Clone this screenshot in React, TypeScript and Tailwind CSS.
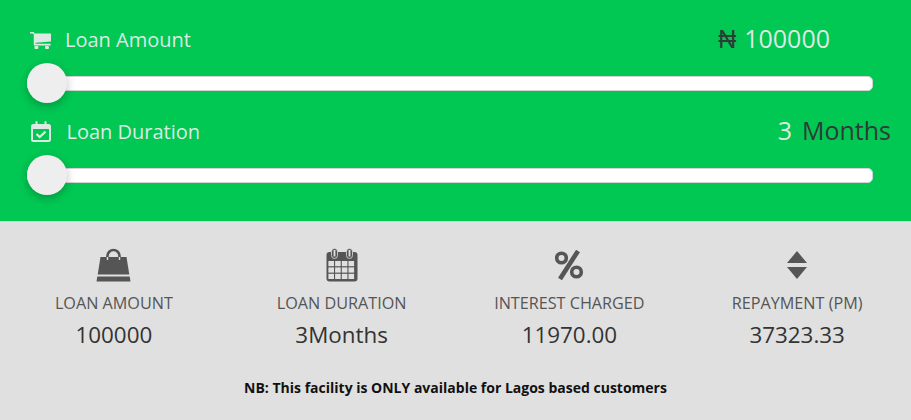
function CartIcon() {
  return (
    <svg width="21" height="17" viewBox="0 0 21 17" fill="#dfe9e3">
      <path d="M0 0h3.6l.9 1.6H21v8l-15.4 1.2v1h15v1.6H3.8V2.4L2.8 1.4H0z" />
      <rect x="4.4" y="14" width="4" height="3" rx="1" />
      <rect x="15" y="14" width="4" height="3" rx="1" />
    </svg>
  );
}

function CalendarCheckIcon() {
  return (
    <svg width="20" height="21" viewBox="0 0 20 21" fill="none" stroke="#dfe9e3" strokeWidth="2">
      <rect x="1" y="4" width="18" height="16" rx="1.5" />
      <path d="M5.5 1v4.5M14.5 1v4.5" strokeLinecap="round" />
      <path d="M1 6.5h18" strokeWidth="3" />
      <path d="M5.5 13l3.2 3 5.8-5.4" strokeWidth="2.2" />
    </svg>
  );
}

function BagIcon() {
  return (
    <svg width="35" height="34" viewBox="0 0 35 34">
      <path d="M11.5 15V8a6 6 0 0 1 12 0V15" fill="none" stroke="#555" strokeWidth="2.6" />
      <path d="M4.5 9h26l2.8 17.5H1.7z" fill="#555" />
      <path d="M11.5 9v3M23.5 9v3" stroke="#e0e0e0" strokeWidth="1.4" />
      <path d="M1.3 28.5h32.4l.8 5H.5z" fill="#555" />
    </svg>
  );
}

function CalendarIcon() {
  const cells = [];
  for (let r = 0; r < 3; r++) {
    for (let c = 0; c < 4; c++) {
      cells.push(<rect key={`${r}-${c}`} x={2.4 + c * 6.7} y={13 + r * 6.4} width="5.6" height="5.2" fill="#e0e0e0" />);
    }
  }
  return (
    <svg width="32" height="34" viewBox="0 0 32 34">
      <rect x="0.5" y="4" width="31" height="29.5" rx="3" fill="#555" />
      <rect x="5.5" y="0.5" width="6" height="10" rx="3" fill="#555" stroke="#e0e0e0" strokeWidth="0.8" />
      <rect x="20.5" y="0.5" width="6" height="10" rx="3" fill="#555" stroke="#e0e0e0" strokeWidth="0.8" />
      <rect x="7.6" y="2" width="1.8" height="6.5" fill="#e0e0e0" />
      <rect x="22.6" y="2" width="1.8" height="6.5" fill="#e0e0e0" />
      {cells}
    </svg>
  );
}

function PercentIcon() {
  return (
    <svg width="30" height="30" viewBox="0 0 30 30" fill="none" stroke="#555">
      <circle cx="7.5" cy="8" r="4.8" strokeWidth="3.6" />
      <circle cx="22.5" cy="22" r="4.8" strokeWidth="3.6" />
      <path d="M24 1L6 29" strokeWidth="4.6" />
    </svg>
  );
}

function SortIcon() {
  return (
    <svg width="20" height="28" viewBox="0 0 20 28" fill="#555">
      <path d="M10 0l10 12H0z" />
      <path d="M0 16h20L10 28z" />
    </svg>
  );
}

function Slider() {
  return (
    <div className="relative h-[15px] ml-[27px] mr-[38px] rounded-[5px] bg-white border border-[#d3d3d3]">
      <div className="absolute left-[-1px] top-[-14px] w-10 h-10 rounded-full bg-[#eeeeee] shadow-[0_3px_10px_rgba(0,0,0,0.25)]" />
    </div>
  );
}

const stats = [
  { label: 'LOAN AMOUNT', value: '100000', icon: <BagIcon /> },
  { label: 'LOAN DURATION', value: '3Months', icon: <CalendarIcon /> },
  { label: 'INTEREST CHARGED', value: '11970.00', icon: <PercentIcon /> },
  { label: 'REPAYMENT (PM)', value: '37323.33', icon: <SortIcon /> },
];

export default function App() {
  return (
    <div className="w-[911px] h-[420px] overflow-hidden bg-[#e0e0e0] font-['Open_Sans',sans-serif]">
      <div className="h-[222px] bg-[#00c853] border-b border-[#d8d8d8]">
        {/* Loan amount */}
        <div className="h-[76px] pt-[24px] flex items-start">
          <div className="w-[65px] pl-[30px] pt-[8px]">
            <CartIcon />
          </div>
          <span className="text-[20px] leading-[32px] text-[#dfe9e3]">Loan Amount</span>
          <div className="ml-auto mr-[81px] text-[25px] leading-[28px] flex gap-[8px]">
            <span className="text-[#2f3b36]">₦</span>
            <span className="text-[#dfe9e3]">100000</span>
          </div>
        </div>
        <Slider />

        {/* Loan duration */}
        <div className="h-[77px] pt-[25px] flex items-start">
          <div className="w-[66.5px] pl-[31px] pt-[5px]">
            <CalendarCheckIcon />
          </div>
          <span className="text-[20px] leading-[32px] text-[#dfe9e3]">Loan Duration</span>
          <div className="ml-auto mr-[20px] text-[25px] leading-[28px] flex gap-[10px]">
            <span className="text-[#dfe9e3]">3</span>
            <span className="text-[#2f3b36]">Months</span>
          </div>
        </div>
        <Slider />
      </div>

      <div className="grid grid-cols-4 pt-[26px]">
        {stats.map((s) => (
          <div key={s.label} className="flex flex-col items-center">
            <div className="h-[34px] flex items-center justify-center">{s.icon}</div>
            <div className="mt-[9px] text-[16.2px] leading-[24px] text-[#555555]">{s.label}</div>
            <div className="mt-[2px] text-[22.4px] leading-[36px] text-[#333333]">{s.value}</div>
          </div>
        ))}
      </div>

      <p className="mt-[25px] text-center text-[14px] leading-[20px] font-bold text-[#111111]">
        NB: This facility is ONLY available for Lagos based customers
      </p>
    </div>
  );
}
